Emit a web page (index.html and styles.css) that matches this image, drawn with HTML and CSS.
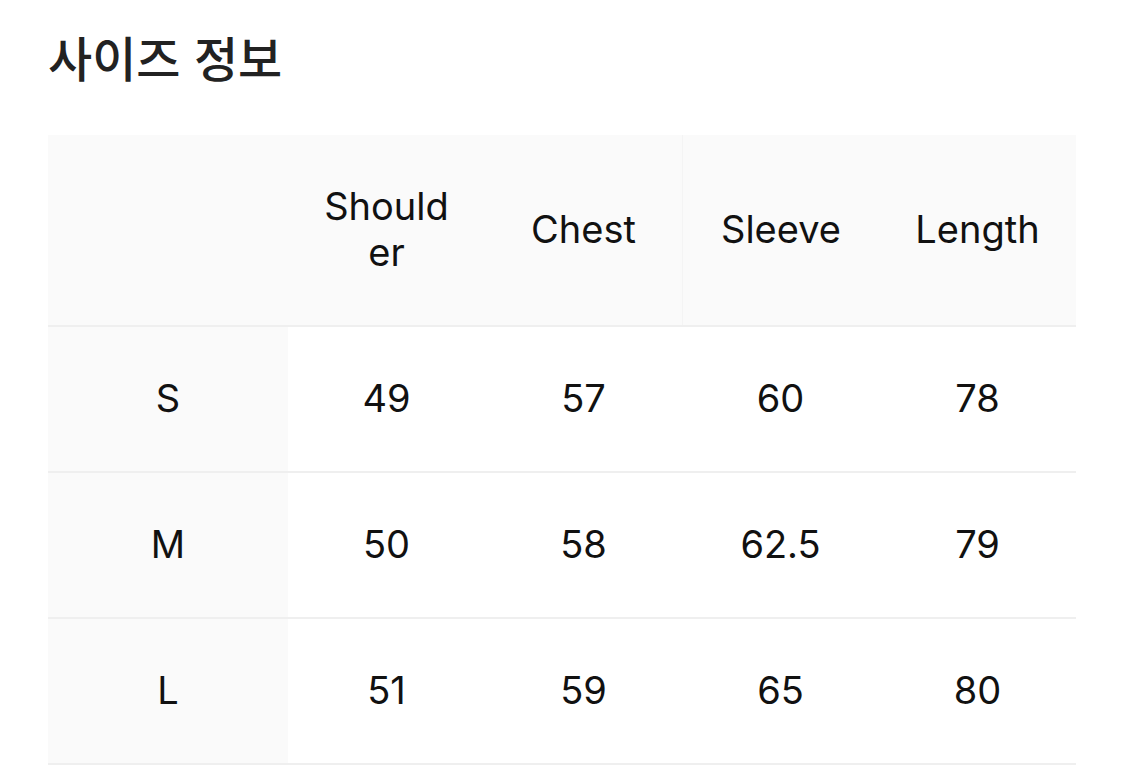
FILE: index.html
```html
<!DOCTYPE html>
<html lang="ko">
<head>
<meta charset="utf-8">
<link rel="stylesheet" href="styles.css">
</head>
<body>
<div class="page">
  <h1 class="title">사이즈 정보</h1>
  <div class="table">
    <div class="row head">
      <div class="cell label"></div>
      <div class="cell">Shoulder</div>
      <div class="cell">Chest</div>
      <div class="cell">Sleeve</div>
      <div class="cell">Length</div>
    </div>
    <div class="row">
      <div class="cell label">S</div>
      <div class="cell">49</div>
      <div class="cell">57</div>
      <div class="cell">60</div>
      <div class="cell">78</div>
    </div>
    <div class="row">
      <div class="cell label">M</div>
      <div class="cell">50</div>
      <div class="cell">58</div>
      <div class="cell">62.5</div>
      <div class="cell">79</div>
    </div>
    <div class="row">
      <div class="cell label">L</div>
      <div class="cell">51</div>
      <div class="cell">59</div>
      <div class="cell">65</div>
      <div class="cell">80</div>
    </div>
  </div>
</div>
</body>
</html>
```
FILE: styles.css
```css
html, body {
  margin: 0;
  padding: 0;
  background: #ffffff;
}
.page {
  padding: 28px 49px 0 48px;
  font-family: Inter, "Noto Sans", "Noto Sans CJK KR", sans-serif;
  color: #111;
}
.title {
  margin: 0;
  font-family: "Noto Sans CJK KR", sans-serif;
  font-size: 48px;
  font-weight: 500;
  line-height: 56px;
  color: #222;
  letter-spacing: 0;
}
.table {
  margin-top: 51px;
  width: 1028px;
}
.row {
  display: grid;
  grid-template-columns: 240px repeat(4, 197px);
  height: 146px;
  border-bottom: 2px solid #efefef;
  box-sizing: border-box;
}
.row.head {
  height: 192px;
  background: #fafafa;
}
.cell {
  display: flex;
  align-items: center;
  justify-content: center;
  text-align: center;
  padding: 0 30px;
  font-size: 38px;
  line-height: 1.2;
  word-break: break-all;
}
.label {
  background: #fafafa;
}
.row.head .cell:nth-child(4) {
  border-left: 1px solid #f4f4f4;
}
```
